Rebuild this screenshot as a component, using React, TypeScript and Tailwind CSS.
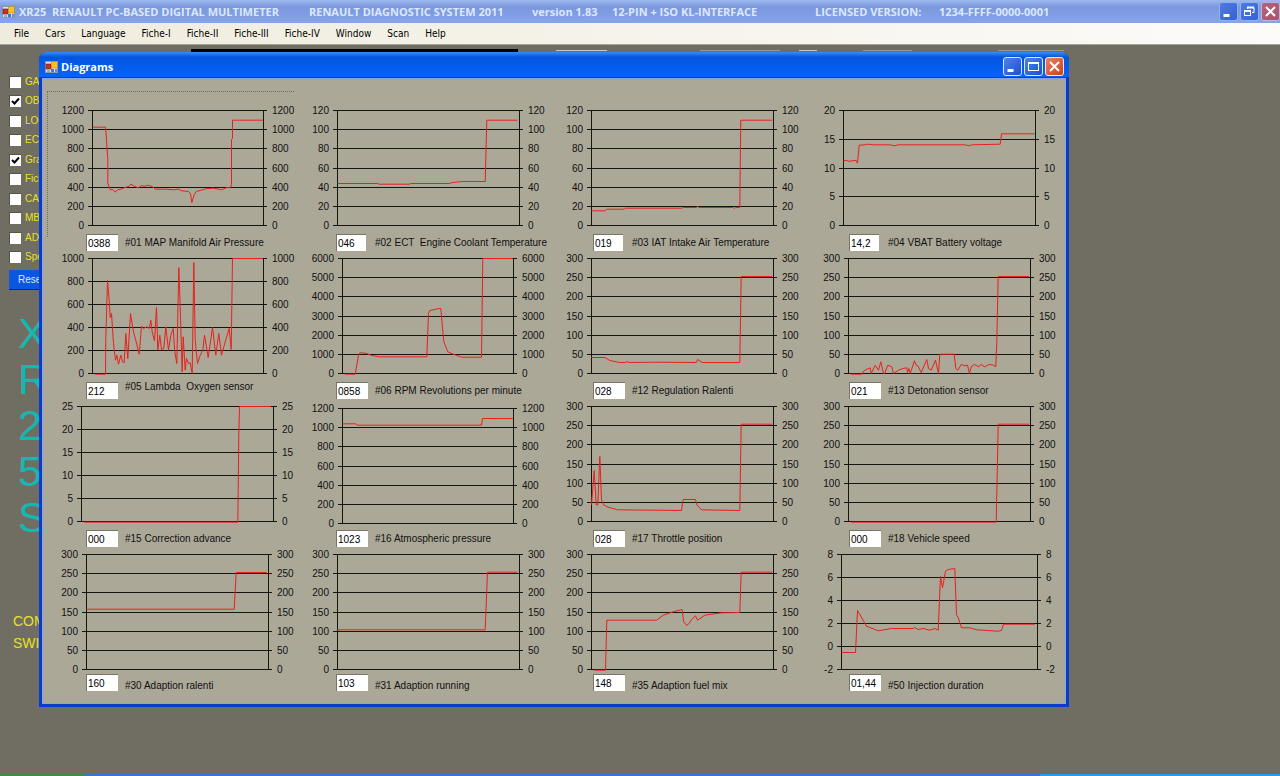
import React from "react";

type Diagram = {
  id: string;
  value: string;
  label: string;
  ticks: number[];
  left: number;
  right: number;
  top?: number;
  narrow?: boolean;
  labelPos?: "top" | "bottom";
  // x,y pairs measured from the plot's top left corner, 3 units to a pixel
  trace: string;
};

const T1200 = [1200, 1000, 800, 600, 400, 200, 0];
const T120 = [120, 100, 80, 60, 40, 20, 0];
const T20 = [20, 15, 10, 5, 0];
const T25 = [25, 20, 15, 10, 5, 0];
const T300 = [300, 250, 200, 150, 100, 50, 0];
const T1000 = [1000, 800, 600, 400, 200, 0];
const T6000 = [6000, 5000, 4000, 3000, 2000, 1000, 0];
const T8 = [8, 6, 4, 2, 0, -2];

const PLOT_HEIGHT = 115;

const diagrams: Diagram[] = [
  {
    id: "01", value: "0388", label: "#01 MAP Manifold Air Pressure", ticks: T1200, left: 45, right: 216,
    trace: "0,50 39,50 41,73 46,148 46,218 53,238 59,236 68,245 75,238 85,236 97,231 109,228 115,221 127,228 138,232 147,225 155,228 165,224 179,228 189,236 223,236 243,238 258,236 268,241 288,243 294,250 298,276 305,253 311,243 323,240 339,235 363,233 388,238 403,231 413,232 417,223 417,88 420,83 420,29 511,29",
  },
  {
    id: "02", value: "046", label: "#02 ECT  Engine Coolant Temperature", ticks: T120, left: 40, right: 222, narrow: true,
    trace: "0,219 120,219 125,221 215,221 220,219 335,219 345,216 375,213 443,213 448,29 540,29",
  },
  {
    id: "03", value: "019", label: "#03 IAT Intake Air Temperature", ticks: T120, left: 37, right: 219, narrow: true,
    trace: "0,301 40,301 46,296 98,296 102,293 270,293 275,291 315,291 318,287 322,291 425,291 428,294 432,291 445,291 446,180 448,29 542,29",
  },
  {
    id: "04", value: "14,2", label: "#04 VBAT Battery voltage", ticks: T20, left: 33, right: 225, narrow: true,
    trace: "0,150 10,150 15,152 38,150 42,158 47,104 65,103 72,101 90,103 140,103 152,106 165,103 365,103 376,106 385,103 470,101 474,70 573,70",
  },
  {
    id: "05", value: "212", label: "#05 Lambda  Oxygen sensor", ticks: T1000, left: 45, right: 216, labelPos: "top",
    trace: "8,347 39,347 40,240 45,65 50,125 53,177 57,165 63,255 69,305 73,290 78,317 85,290 90,310 95,313 100,225 106,300 114,165 123,220 131,250 140,287 147,203 153,210 163,205 170,210 175,185 179,220 186,247 192,147 196,275 202,230 207,273 214,270 220,205 228,275 235,230 242,210 247,280 253,315 259,27 263,145 269,340 272,235 278,335 282,300 288,315 293,313 299,345 304,12 308,245 315,315 323,290 331,275 336,230 347,297 360,207 370,290 379,225 387,290 398,250 410,210 416,273 420,0 511,0",
  },
  {
    id: "06", value: "0858", label: "#06 RPM Revolutions per minute", ticks: T6000, left: 45, right: 216,
    trace: "8,347 38,347 48,290 52,283 70,284 88,291 110,295 253,295 258,165 262,156 290,150 295,150 304,250 316,280 335,288 358,296 417,296 421,0 511,0",
  },
  {
    id: "12", value: "028", label: "#12 Regulation Ralenti", ticks: T300, left: 37, right: 219,
    trace: "0,297 40,297 55,306 85,312 100,312 105,310 115,312 190,311 314,312 318,303 332,312 445,312 449,54 542,54",
  },
  {
    id: "13", value: "021", label: "#13 Detonation sensor", ticks: T300, left: 38, right: 220,
    trace: "8,347 40,347 45,338 55,332 65,328 68,345 80,320 90,335 97,310 105,345 108,345 118,320 130,325 135,345 150,335 163,330 175,328 177,342 181,330 185,345 198,307 203,320 208,322 218,342 235,303 240,330 248,335 261,305 270,345 274,287 317,287 322,330 328,335 338,318 350,322 357,320 363,345 368,325 378,318 390,325 398,318 408,325 422,318 435,320 442,325 445,250 449,54 541,54",
  },
  {
    id: "15", value: "000", label: "#15 Correction advance", ticks: T25, left: 34, right: 226,
    trace: "8,347 469,347 470,255 472,85 474,0 568,0",
  },
  {
    id: "16", value: "1023", label: "#16 Atmospheric pressure", ticks: T1200, left: 45, right: 216, top: 9,
    trace: "0,46 40,46 44,50 417,50 420,30 511,30",
  },
  {
    id: "17", value: "028", label: "#17 Throttle position", ticks: T300, left: 37, right: 219,
    trace: "0,295 8,192 14,295 19,295 25,150 30,280 36,295 50,302 78,310 270,312 275,279 312,279 316,295 330,310 445,312 449,53 542,53",
  },
  {
    id: "18", value: "000", label: "#18 Vehicle speed", ticks: T300, left: 38, right: 220,
    trace: "8,347 443,347 449,53 542,53",
  },
  {
    id: "30", value: "160", label: "#30 Adaption ralenti", ticks: T300, left: 39, right: 221, labelPos: "bottom",
    trace: "0,164 443,164 449,54 540,54",
  },
  {
    id: "31", value: "103", label: "#31 Adaption running", ticks: T300, left: 40, right: 222, labelPos: "bottom",
    trace: "0,226 443,226 450,53 540,53",
  },
  {
    id: "35", value: "148", label: "#35 Adaption fuel mix", ticks: T300, left: 37, right: 219, labelPos: "bottom",
    trace: "8,347 42,347 46,197 195,197 215,182 245,172 272,165 276,200 285,213 292,208 300,195 312,184 318,197 340,182 390,175 445,174 449,53 542,53",
  },
  {
    id: "50", value: "01,44", label: "#50 Injection duration", ticks: T8, left: 31, right: 227, labelPos: "bottom",
    trace: "0,294 42,294 48,168 75,215 90,221 110,229 150,222 215,222 220,219 230,225 245,222 265,227 280,222 290,227 297,65 303,100 312,50 320,45 340,42 345,180 350,190 360,220 385,220 405,226 470,230 480,228 486,209 580,209",
  },
];

function Chart({ d }: { d: Diagram }) {
  const top = d.top ?? 7;
  const points = d.trace
    .split(" ")
    .map((p) => p.split(",").map(Number))
    .map(([x, y]) => `${(d.left + 0.5 + x / 3).toFixed(1)},${(top + 0.5 + y / 3).toFixed(1)}`)
    .join(" ");
  return (
    <svg width="247" height="127" className="block overflow-visible" role="img" aria-label={d.label}>
      <g stroke="#15150f" strokeWidth="1" shapeRendering="crispEdges">
        {d.ticks.map((t, i) => {
          const y = top + Math.round((i * PLOT_HEIGHT) / (d.ticks.length - 1)) + 0.5;
          return <line key={t} x1={d.left - 4} x2={d.right + 4} y1={y} y2={y} />;
        })}
        <line x1={d.left + 0.5} x2={d.left + 0.5} y1={top} y2={top + PLOT_HEIGHT} />
        <line x1={d.right + 0.5} x2={d.right + 0.5} y1={top} y2={top + PLOT_HEIGHT} />
      </g>
      <g fill="#111" className="text-[10px]">
        {d.ticks.map((t, i) => {
          const y = top + Math.round((i * PLOT_HEIGHT) / (d.ticks.length - 1)) + 4;
          return (
            <React.Fragment key={t}>
              <text x={d.left - 8} y={y} textAnchor="end">{t}</text>
              <text x={d.right + 9} y={y}>{t}</text>
            </React.Fragment>
          );
        })}
      </g>
      <polyline points={points} fill="none" stroke="#e8201c" strokeWidth="1" />
    </svg>
  );
}

function DiagramCell({ d }: { d: Diagram }) {
  const low = d.labelPos === "bottom";
  return (
    <div className={low ? "flex h-[148px] flex-col" : "flex h-[148px] flex-col justify-between"}>
      <Chart d={d} />
      <div className={low ? "flex h-[19px] items-start pl-[39px]" : "flex h-[17px] items-center pl-[39px]"}>
        <div className="w-[39px] shrink-0">
          <input
            id={`v${d.id}`}
            defaultValue={d.value}
            className={
              (d.narrow ? "w-[30px]" : "w-8") +
              " block h-[17px] border-t border-l border-[#77756a] bg-white pl-px text-[10px] leading-4 text-black outline-none"
            }
          />
        </div>
        <label
          htmlFor={`v${d.id}`}
          className={
            (d.labelPos === "top" ? "-mt-0.5 self-start" : low ? "self-end" : "") +
            " text-[10px] leading-[14px] whitespace-pre text-[#111]"
          }
        >
          {d.label}
        </label>
      </div>
    </div>
  );
}

function AppIcon() {
  return (
    <svg width="14" height="14" viewBox="0 0 14 14" aria-hidden="true">
      <rect x="0.5" y="1.5" width="12" height="11" fill="#dfe3ea" stroke="#8b97ae" />
      <rect x="1" y="4" width="5" height="5" fill="#c2331f" stroke="#7d1f14" strokeWidth="0.6" />
      <rect x="6.5" y="1.5" width="6" height="6.5" fill="#f4c32c" stroke="#b98312" strokeWidth="0.6" />
      <rect x="6" y="9" width="3" height="3" fill="#3f78d8" />
      <rect x="10" y="9" width="2" height="3" fill="#7d8aa3" />
      <rect x="2" y="10" width="3" height="2" fill="#9fa9bb" />
    </svg>
  );
}

function CaptionButton({ kind, dim }: { kind: "Minimize" | "Maximize" | "Restore" | "Close"; dim?: boolean }) {
  const tone =
    kind === "Close"
      ? dim
        ? "border-[#b9b6dd] bg-linear-to-br from-[#b4607c] to-[#a8556c]"
        : "border-[#fbe4dc] bg-linear-to-br from-[#e8805f] to-[#cf3d16]"
      : dim
        ? "border-[#8fb0ee] bg-linear-to-br from-[#4f7ce0] to-[#3560d2]"
        : "border-[#dbe6fb] bg-linear-to-br from-[#4a83ee] to-[#1a4fd0]";
  return (
    <button aria-label={kind} className={"flex size-[19px] items-center justify-center rounded-[3px] border " + tone}>
      <svg width="15" height="15" viewBox="0 0 15 15" fill="none" stroke="#fff" aria-hidden="true">
        {kind === "Minimize" && <path d="M2.500 11.500h6" strokeWidth="3" />}
        {kind === "Maximize" && (
          <>
            <rect x="2.500" y="3.500" width="10" height="8" />
            <path d="M2 4h11" strokeWidth="2" />
          </>
        )}
        {kind === "Restore" && (
          <>
            <path d="M5.500 5V3.500h6.500v5h-2" />
            <path d="M5 3.500h7" strokeWidth="2" />
            <rect x="2.500" y="6.500" width="6" height="5" />
            <path d="M2 7h7" strokeWidth="2" />
          </>
        )}
        {kind === "Close" && <path d="M3 3l9 9M12 3l-9 9" strokeWidth="2" />}
      </svg>
    </button>
  );
}

const menus = ["File", "Cars", "Language", "Fiche-I", "Fiche-II", "Fiche-III", "Fiche-IV", "Window", "Scan", "Help"];

const options = [
  { name: "GA", on: false },
  { name: "OB", on: true },
  { name: "LOG", on: false },
  { name: "ECU", on: false },
  { name: "Gra", on: true },
  { name: "Fich", on: false },
  { name: "CAN", on: false },
  { name: "MB", on: false },
  { name: "AD", on: false },
  { name: "Spe", on: false },
];

export default function App() {
  return (
    <div className="flex min-h-screen flex-col overflow-hidden bg-[#706e62] font-['Liberation_Sans',Arial,sans-serif]">
      <header className="flex h-[23px] items-center bg-linear-to-b from-[#9db9ee] via-[#7b97de] via-30% to-[#85a5ea] pl-[2px] text-[#dce8fd]">
        <AppIcon />
        <h1 className="flex flex-1 pl-[3px] font-['Open_Sans','Noto_Sans',sans-serif] text-[11px] leading-4 font-bold whitespace-pre">
          <span className="w-[290px]">XR25  RENAULT PC-BASED DIGITAL MULTIMETER</span>
          <span className="w-[223px]">RENAULT DIAGNOSTIC SYSTEM 2011</span>
          <span className="w-20">version 1.83</span>
          <span className="w-[203px]">12-PIN + ISO KL-INTERFACE</span>
          <span className="w-[124px]">LICENSED VERSION:</span>
          <span>1234-FFFF-0000-0001</span>
        </h1>
        <div className="flex gap-[2px]">
          <CaptionButton kind="Minimize" dim />
          <CaptionButton kind="Restore" dim />
          <CaptionButton kind="Close" dim />
        </div>
      </header>

      <nav className="flex h-[22px] items-center gap-4 border-b border-[#a5a396] bg-linear-to-r from-[#efecdd] to-[#fcfbf8] pl-[14px] font-['DejaVu_Sans_Condensed','DejaVu_Sans',sans-serif] text-[10px] leading-4 text-black">
        {menus.map((m) => (
          <button key={m}>{m}</button>
        ))}
      </nav>

      <main className="relative flex-1">
        <div className="flex h-[7px] items-end pl-[191px]">
          <div className="h-[3px] w-[327px] bg-black" />
          <div className="ml-[38px] h-[2px] w-[51px] border-t border-[#c9c7bd]" />
          <div className="ml-[93px] h-[2px] w-20 border-t border-[#9a988c]" />
          <div className="ml-[19px] h-[2px] w-[18px] border-t border-[#c9c7bd]" />
          <div className="ml-[46px] h-[2px] w-[49px] border-t border-[#9a988c]" />
          <div className="ml-[86px] h-[2px] w-[66px] border-t border-[#9a988c]" />
        </div>

        <aside className="flex w-[60px] flex-col overflow-hidden pt-5 pl-[9px]">
          <div className="flex h-[195px] flex-col">
            {options.map((o) => (
              <label key={o.name} className="flex flex-1 items-center gap-1 text-[10px] leading-4 text-[#e6e21e]">
                <input type="checkbox" defaultChecked={o.on} className="peer sr-only" />
                <span className="flex size-3 shrink-0 items-center justify-center border-t border-l border-[#55534a] bg-white text-transparent peer-checked:text-black">
                  <svg width="9" height="9" viewBox="0 0 9 9" fill="none" stroke="currentColor" strokeWidth="2" aria-hidden="true">
                    <path d="M1 4l2.500 2.500L8 1.500" />
                  </svg>
                </span>
                {o.name}
              </label>
            ))}
          </div>
          <button className="mt-[3px] h-5 w-12 border-r border-b border-[#0a2a80] bg-[#0b57e0] pl-[9px] text-left text-[10px] text-[#d8ecff]">
            Reset
          </button>
          <div className="flex flex-col pt-5 pl-[9px] text-[43px] leading-[46px] text-[#14b8b0]">
            {["X", "R", "2", "5", "S"].map((c) => (
              <span key={c}>{c}</span>
            ))}
          </div>
          <div className="pt-[70px] pl-1 text-[14px] leading-[22px] text-[#e6e21e]">
            <p>COM</p>
            <p>SWI</p>
          </div>
        </aside>

        <section
          aria-label="Diagrams"
          className="absolute top-[7px] left-[39px] flex w-[1030px] flex-col rounded-t-lg border-x-3 border-b-3 border-[#0a3ccc] bg-[#aba898]"
        >
          <div className="-mx-[3px] flex h-[26px] items-center rounded-t-lg border-b border-[#0a3ccc] bg-linear-to-b from-[#3a8cf8] via-[#0355dd] via-20% to-[#0564fb] pt-1 pr-[5px] pl-[6px] text-white">
            <AppIcon />
            <h2 className="flex-1 pl-[2px] font-['Open_Sans','Noto_Sans',sans-serif] text-[11px] leading-4 font-bold">Diagrams</h2>
            <div className="flex gap-[2px]">
              <CaptionButton kind="Minimize" />
              <CaptionButton kind="Maximize" />
              <CaptionButton kind="Close" />
            </div>
          </div>
          <div className="relative border border-t-2 border-[#86a3e6] pt-[23px] pb-2 pl-1">
            <div className="absolute top-[11px] left-1 h-[146px] w-[247px] border-t border-l border-dotted border-[#6d6a5e]" />
            <div className="grid grid-cols-[minmax(0,250fr)_minmax(0,257fr)_minmax(0,256fr)_minmax(0,255fr)]">
              {diagrams.map((d) => (
                <DiagramCell key={d.id} d={d} />
              ))}
            </div>
          </div>
        </section>
      </main>

      <footer className="flex h-[2px]">
        <div className="w-[85px] bg-[#3c8f3e]" />
        <div className="flex-1 bg-[#3b73d6]" />
        <div className="w-60 bg-[#2f9be8]" />
      </footer>
    </div>
  );
}
